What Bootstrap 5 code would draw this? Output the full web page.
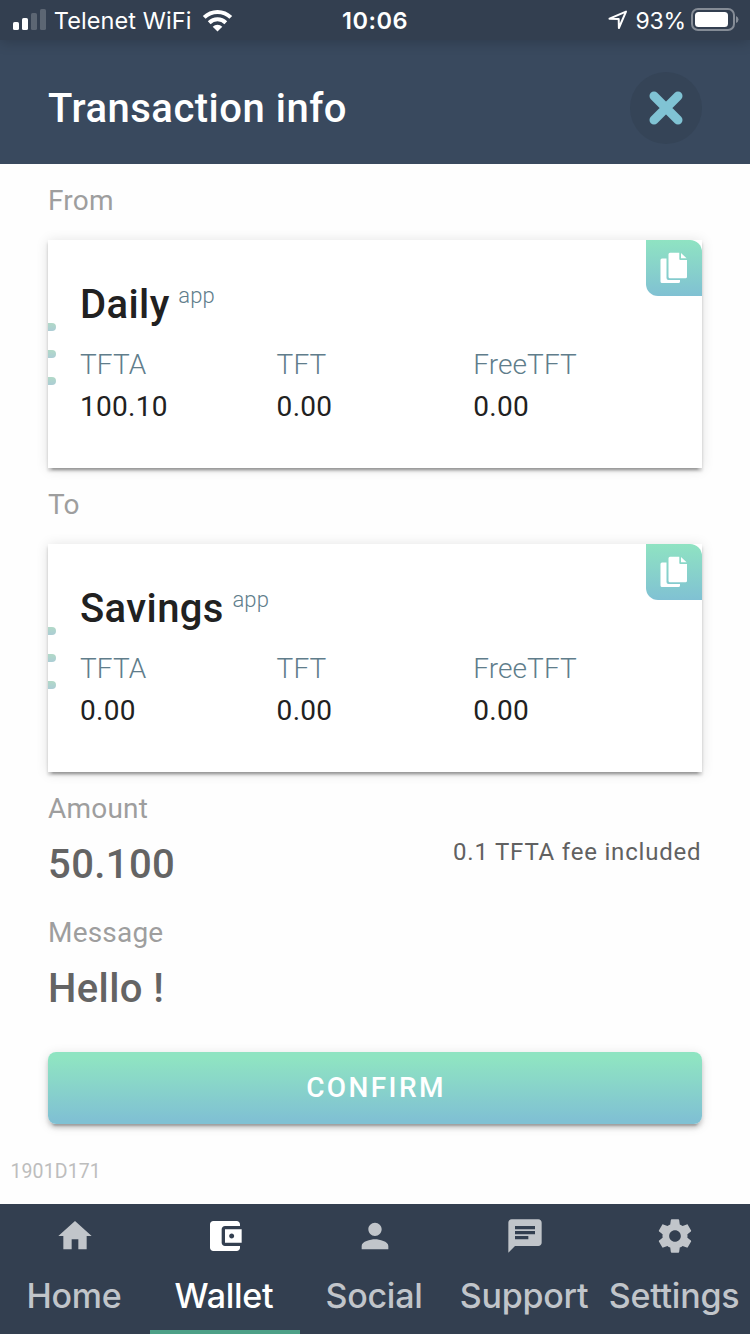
<!DOCTYPE html>
<html lang="en">
<head>
<meta charset="utf-8">
<meta name="viewport" content="width=device-width, initial-scale=1">
<title>Transaction info</title>
<link href="https://cdn.jsdelivr.net/npm/bootstrap@5.3.0/dist/css/bootstrap.min.css" rel="stylesheet">
<style>
  body { font-family: Roboto, sans-serif; font-size: 28px; line-height: 40px; letter-spacing: .2px; background: #fefefe; color: #212121; height: 1334px; overflow: hidden; }
  svg { display: block; flex: none; }
  .status { height: 40px; background: #333f50; color: #fff; font-family: Inter, sans-serif; font-size: 23.5px; letter-spacing: .1px; line-height: 42px; padding: 0 11px 0 13px; box-shadow: 0 2px 14px rgba(0,0,0,.2); z-index: 1; }
  .status > div { flex: 1 1 0; }
  .network, .percent { padding-top: 2px; }
  .wifi { margin-left: 10px; }
  .clock { font-weight: 600; letter-spacing: .5px; text-indent: -2px; }
  .percent { font-size: 23px; letter-spacing: -.2px; margin: 0 5px 0 8px; }
  .topbar { height: 124px; background: #39495e; color: #fff; padding: 4px 48px 0; }
  .topbar h1 { font-size: 40px; font-weight: 500; line-height: 64px; letter-spacing: .5px; padding-top: 2px; }
  .close-btn { width: 72px; height: 72px; background: #354457; border: 0; }
  .page-body { padding: 0 48px; height: 1040px; }
  .caption { color: #9e9e9e; height: 76px; padding-top: 17px; }
  .caption-sm { height: 68px; }
  .wallet { height: 228px; border: 0; border-radius: 0; padding: 41px 32px 0; background: #fff; overflow: visible; box-shadow: 0 6px 2px -4px rgba(0,0,0,.2), 0 3px 3px rgba(0,0,0,.2), 0 1px 12px rgba(0,0,0,.12); }
  .wallet h2 { font-size: 40px; font-weight: 500; line-height: 48px; color: #212121; letter-spacing: .4px; }
  .wallet h2 small { font-size: 22px; font-weight: 300; line-height: 28px; color: #607d8b; margin: 1px 0 0 8.6px; letter-spacing: .1px; }
  .wallet .unit { color: #607d8b; font-weight: 300; line-height: 42px; letter-spacing: .1px; }
  .wallet .value { line-height: 42px; letter-spacing: .3px; }
  .balances { padding-top: 15px; }
  .balances > div { width: 196.6px; }
  .grip { left: 0; top: 83px; gap: 19px; }
  .grip i { width: 8px; height: 8px; border-radius: 0 4px 4px 0; background: linear-gradient(#b1d9c7, #accdd5); }
  .copy-btn { right: 0; top: 0; width: 56px; height: 56px; border: 0; border-radius: 0 12px 0 12px; background: linear-gradient(#8fe3c2, #80c1d3); }
  .entry { font-size: 40px; font-weight: 500; line-height: 50px; height: 48px; color: #646464; letter-spacing: .4px; }
  .fee { font-size: 24px; letter-spacing: .8px; line-height: 24px; color: #616161; padding-right: .6px; }
  .confirm { height: 72px; border-radius: 8px; border: 0; color: #fff; font-size: 28px; font-weight: 500; letter-spacing: 2.4px; line-height: 72px; padding: 0 0 0 2px; margin-top: 40px; background: linear-gradient(#8fe4c2 8%, #80c1d3 94%); box-shadow: 0 6px 2px -4px rgba(0,0,0,.2), 0 4px 4px rgba(0,0,0,.16), 0 2px 12px rgba(0,0,0,.12); }
  .build { font-size: 19.5px; letter-spacing: .1px; color: #bdbdbd; line-height: 24px; margin: 36px 0 0 -37.500px; }
  .tabs { height: 130px; background: #333f50; font-family: Inter, sans-serif; font-size: 34px; font-weight: 500; letter-spacing: -.25px; }
  .tabs a { width: 150px; height: 130px; padding-top: 12px; color: #c1c5ca; text-decoration: none; white-space: nowrap; }
  .tabs a span { margin: 20px 2px 0 0; line-height: 40px; }
  .tabs a.active { color: #fff; border-bottom: 4px solid #4da087; }
</style>
</head>
<body class="d-flex flex-column">
<div class="status d-flex position-relative">
  <div class="d-flex align-items-center">
    <svg width="34" height="22" viewBox="0 0 34 22" fill="#fff"><rect y="13" width="6" height="8" rx="1.6"/><rect x="9" y="9" width="6" height="12" rx="1.6"/><g opacity=".2"><rect x="18" y="4" width="6" height="17" rx="1.6"/><rect x="27" width="6" height="21" rx="1.6"/></g></svg>
    <span class="network">&nbsp;Telenet WiFi</span>
    <svg class="wifi" width="31" height="24" viewBox="0 0 31 24"><g fill="none" stroke="#fff" stroke-width="4"><path d="M2.2 9.4a19 19 0 0 1 26.6 0"/><path d="M7.2 14.7a12 12 0 0 1 16.6 0"/></g><path fill="#fff" d="M10.7 18.7a7 7 0 0 1 9.6 0L15.500 23.500z"/></svg>
  </div>
  <div class="clock text-center">10:06</div>
  <div class="d-flex align-items-center justify-content-end">
    <svg width="20" height="20" viewBox="0 0 20 20"><path d="M1.500 8.700L18 1.600 10.900 18 10.700 9z" fill="none" stroke="#fff" stroke-width="2" stroke-linejoin="round"/></svg>
    <span class="percent">93%</span>
    <svg width="48" height="24" viewBox="0 0 48 24"><rect x="1" y="1" width="42" height="21" rx="6" fill="none" stroke="#858c96" stroke-width="2"/><rect x="4" y="4" width="33" height="15" rx="3.500" fill="#fff"/><path d="M45 8q2.500 1 2.500 3.500T45 15z" fill="#858c96"/></svg>
  </div>
</div>
<header class="topbar d-flex justify-content-between align-items-center">
  <h1 class="m-0 mt-2">Transaction info</h1>
  <button class="close-btn btn rounded-circle p-0 mt-2 d-flex align-items-center justify-content-center" aria-label="Close"><svg width="34" height="34" viewBox="0 0 34 34"><path d="M5 5l24 24M29 5L5 29" stroke="#80c3d4" stroke-width="9" stroke-linecap="round"/></svg></button>
</header>
<main class="page-body d-flex flex-column">
  <div class="caption">From</div>
  <section class="wallet card position-relative">
    <div class="grip position-absolute d-flex flex-column"><i></i><i></i><i></i></div>
    <button class="copy-btn position-absolute d-flex align-items-center justify-content-center p-0" aria-label="Copy"><svg width="28" height="32" viewBox="0 0 28 32" fill="#fff"><path d="M10 .7h9.300v6.200a1 1 0 0 0 1 1H27v16.800a1.500 1.500 0 0 1-1.500 1.500H10a1.500 1.500 0 0 1-1.500-1.500V2.200A1.500 1.500 0 0 1 10 .7z"/><path d="M21 1l5.600 5.300H21z"/><path d="M2 6.500h4.500V26q0 2 2 2H20v1.500a1.500 1.500 0 0 1-1.500 1.500H2a1.500 1.500 0 0 1-1.500-1.500V8A1.500 1.500 0 0 1 2 6.500z"/></svg></button>
    <h2 class="m-0 d-flex align-items-start">Daily<small>app</small></h2>
    <div class="balances d-flex">
      <div><div class="unit">TFTA</div><div class="value">100.10</div></div>
      <div><div class="unit">TFT</div><div class="value">0.00</div></div>
      <div><div class="unit">FreeTFT</div><div class="value">0.00</div></div>
    </div>
  </section>
  <div class="caption">To</div>
  <section class="wallet card position-relative">
    <div class="grip position-absolute d-flex flex-column"><i></i><i></i><i></i></div>
    <button class="copy-btn position-absolute d-flex align-items-center justify-content-center p-0" aria-label="Copy"><svg width="28" height="32" viewBox="0 0 28 32" fill="#fff"><path d="M10 .7h9.300v6.200a1 1 0 0 0 1 1H27v16.800a1.500 1.500 0 0 1-1.500 1.500H10a1.500 1.500 0 0 1-1.500-1.500V2.200A1.500 1.500 0 0 1 10 .7z"/><path d="M21 1l5.600 5.300H21z"/><path d="M2 6.500h4.500V26q0 2 2 2H20v1.500a1.500 1.500 0 0 1-1.500 1.500H2a1.500 1.500 0 0 1-1.500-1.500V8A1.500 1.500 0 0 1 2 6.500z"/></svg></button>
    <h2 class="m-0 d-flex align-items-start">Savings<small>app</small></h2>
    <div class="balances d-flex">
      <div><div class="unit">TFTA</div><div class="value">0.00</div></div>
      <div><div class="unit">TFT</div><div class="value">0.00</div></div>
      <div><div class="unit">FreeTFT</div><div class="value">0.00</div></div>
    </div>
  </section>
  <div class="caption caption-sm">Amount</div>
  <div class="d-flex justify-content-between"><div class="entry">50.100</div><div class="fee">0.1 TFTA fee included</div></div>
  <div class="caption caption-sm mt-2">Message</div>
  <div class="entry">Hello !</div>
  <button class="confirm btn w-100 text-uppercase">Confirm</button>
  <div class="build">1901D171</div>
</main>
<nav class="tabs d-flex">
  <a href="#" class="d-flex flex-column align-items-center"><svg width="40" height="40" viewBox="0 0 24 24" fill="currentColor"><path d="M10 20v-6h4v6h5v-8h3L12 3 2 12h3v8z"/></svg><span>Home</span></a>
  <a href="#" class="active d-flex flex-column align-items-center"><svg width="40" height="40" viewBox="0 0 24 24" fill="currentColor"><path d="M21 18v1c0 1.100-.9 2-2 2H5c-1.110 0-2-.9-2-2V5c0-1.100.89-2 2-2h14c1.100 0 2 .9 2 2v1h-9c-1.110 0-2 .9-2 2v8c0 1.100.89 2 2 2h9zm-9-2h10V8H12v8zm4-2.500c-.83 0-1.500-.67-1.500-1.500s.67-1.500 1.500-1.500 1.500.67 1.500 1.500-.67 1.500-1.500 1.500z"/></svg><span>Wallet</span></a>
  <a href="#" class="d-flex flex-column align-items-center"><svg width="40" height="40" viewBox="0 0 24 24" fill="currentColor"><path d="M12 12c2.210 0 4-1.790 4-4s-1.790-4-4-4-4 1.790-4 4 1.790 4 4 4zm0 2c-2.670 0-8 1.340-8 4v2h16v-2c0-2.660-5.330-4-8-4z"/></svg><span>Social</span></a>
  <a href="#" class="d-flex flex-column align-items-center"><svg width="40" height="40" viewBox="0 0 24 24" fill="currentColor"><path d="M20 2H4c-1.100 0-1.990.9-1.990 2L2 22l4-4h14c1.100 0 2-.9 2-2V4c0-1.100-.9-2-2-2zM6 9h12v2H6V9zm8 5H6v-2h8v2zm4-6H6V6h12v2z"/></svg><span>Support</span></a>
  <a href="#" class="d-flex flex-column align-items-center"><svg width="40" height="40" viewBox="0 0 24 24" fill="currentColor"><path d="M19.430 12.980c.04-.32.070-.64.070-.98s-.03-.66-.07-.98l2.110-1.650c.19-.15.240-.42.120-.64l-2-3.460c-.12-.22-.39-.3-.61-.22l-2.490 1c-.52-.4-1.080-.73-1.690-.98l-.38-2.650C14.460 2.180 14.250 2 14 2h-4c-.25 0-.46.18-.49.42l-.38 2.650c-.61.250-1.170.590-1.690.98l-2.490-1c-.23-.09-.49 0-.61.22l-2 3.460c-.13.220-.07.490.12.640l2.110 1.650c-.04.320-.07.650-.07.980s.03.660.07.980l-2.110 1.650c-.19.150-.24.420-.12.640l2 3.460c.12.220.39.3.61.22l2.490-1c.52.4 1.080.73 1.690.98l.38 2.650c.03.240.24.420.49.420h4c.25 0 .46-.18.49-.42l.38-2.650c.61-.25 1.170-.59 1.690-.98l2.490 1c.23.090.49 0 .61-.22l2-3.460c.12-.22.070-.49-.12-.64l-2.110-1.650zM12 15.500c-1.930 0-3.500-1.570-3.500-3.500s1.570-3.500 3.500-3.500 3.500 1.570 3.500 3.500-1.570 3.500-3.500 3.500z"/></svg><span>Settings</span></a>
</nav>
<script src="https://cdn.jsdelivr.net/npm/bootstrap@5.3.0/dist/js/bootstrap.bundle.min.js"></script>
</body>
</html>
